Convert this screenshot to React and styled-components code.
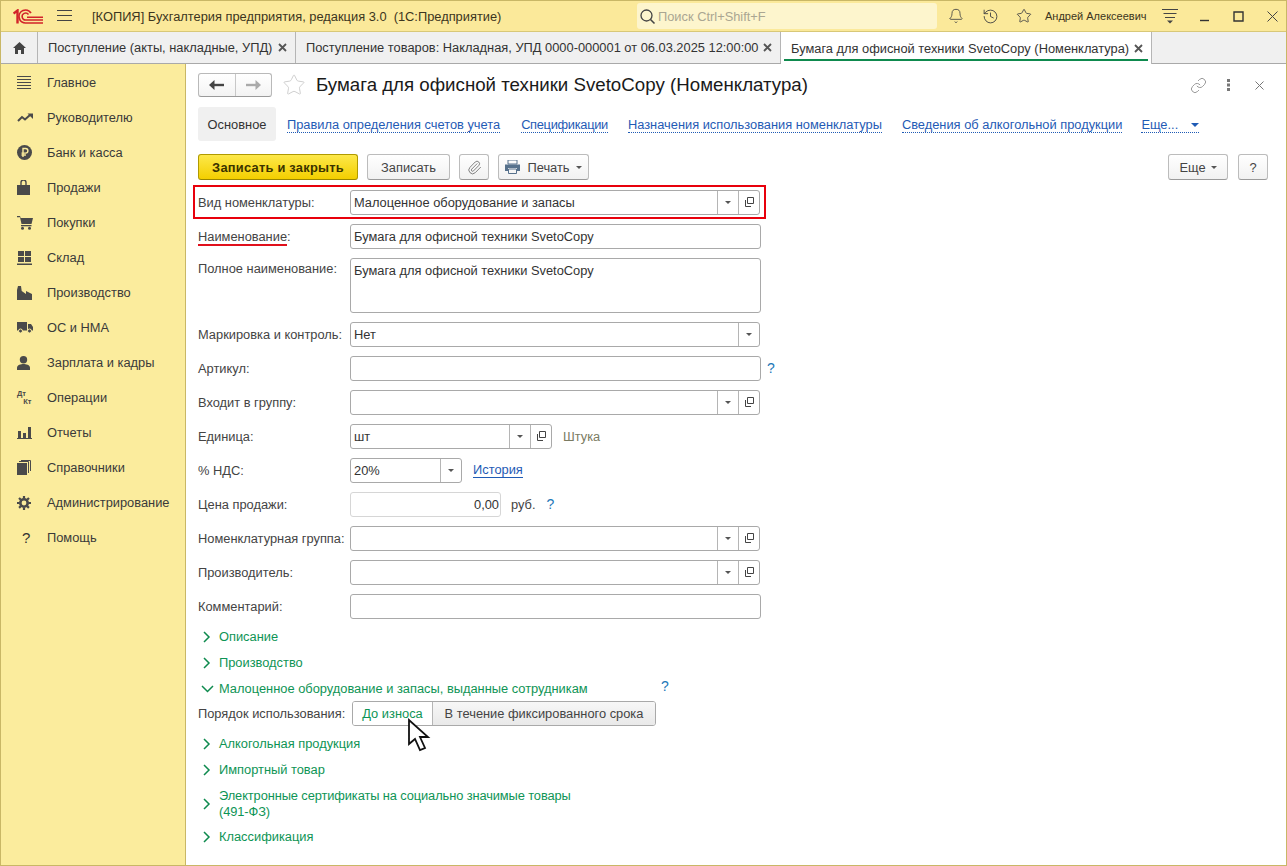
import React from 'react';
import styled, { createGlobalStyle } from 'styled-components';
import { Bell, History, Star, Link, Paperclip } from 'lucide-react';

const GlobalStyle = createGlobalStyle`
  html, body { margin: 0; padding: 0; background: #fff; }
  * { box-sizing: border-box; }
  body { font-family: "Liberation Sans", Arial, sans-serif; font-size: 12.85px; color: #333; }
`;

const Window = styled.div`
  width: 1287px;
  height: 866px;
  display: flex;
  flex-direction: column;
  border: 1px solid #c9b766;
  overflow: hidden;
  position: relative;
`;
const TitleBar = styled.div`
  height: 30px;
  flex: none;
  background: #fbe99a;
  display: flex;
  align-items: center;
  padding-left: 12px;
`;
const MenuGlyph = styled.svg`
  margin-left: 14px;
  flex: none;
`;
const TitleText = styled.div`
  margin-left: 20px;
  width: 545px;
  flex: none;
  color: #3c3520;
  white-space: pre;
`;
const SearchBox = styled.div`
  width: 300px;
  height: 26px;
  background: #fdf5cd;
  border-radius: 3px;
  display: flex;
  align-items: center;
  padding-left: 2px;
  color: #aaa692;
  gap: 2px;
  flex: none;
`;
const TitleCells = styled.div`
  display: flex;
  align-items: center;
  margin-left: 2px;
  flex: none;
`;
const TitleCell = styled.span`
  width: 34px;
  display: flex;
  justify-content: center;
  color: #444;
  flex: none;
`;
const UserName = styled.span`
  font-size: 11px;
  color: #3c3520;
  margin-left: 4px;
  width: 117px;
  white-space: nowrap;
`;
const WinButtons = styled.div`
  display: flex;
  align-items: center;
  margin-left: 9px;
  flex: none;
`;
const TabBar = styled.div`
  height: 33px;
  flex: none;
  background: #f0f0f0;
  border-bottom: 1px solid #a9a9a9;
  border-top: 1px solid #d8c878;
  display: flex;
`;
const HomeTab = styled.div`
  width: 37px;
  border-right: 1px solid #b5b5b5;
  display: flex;
  align-items: center;
  justify-content: center;
`;
const Tab = styled.div`
  width: ${(p) => p.$w}px;
  position: relative;
  display: flex;
  align-items: center;
  justify-content: space-between;
  padding: 0 8px 0 10px;
  border-right: 1px solid #b5b5b5;
  background: ${(p) => (p.$active ? '#fff' : 'transparent')};
  height: ${(p) => (p.$active ? '32px' : '31px')};
  white-space: nowrap;
  color: #333;
  &::after {
    content: '';
    display: ${(p) => (p.$active ? 'block' : 'none')};
    position: absolute;
    left: 3px;
    right: 3px;
    bottom: 3px;
    height: 2px;
    background: #0e8a4e;
  }
`;
const TabClose = styled.svg`
  flex: none;
`;
const Body = styled.div`
  flex: 1;
  display: flex;
  min-height: 0;
`;
const Sidebar = styled.nav`
  width: 185px;
  flex: none;
  background: #fbec9d;
  border-right: 1px solid #c9b766;
  padding-top: 1px;
`;
const NavItem = styled.div`
  height: 35px;
  display: flex;
  align-items: center;
  color: #3a3a3a;
`;
const NavIcon = styled.span`
  width: 46px;
  padding-left: 16px;
  display: flex;
  align-items: center;
  flex: none;
`;
const Main = styled.main`
  flex: 1;
  padding: 0 12px;
  min-width: 0;
`;
const HeaderRow = styled.div`
  height: 42px;
  display: flex;
  align-items: center;
`;
const NavGroup = styled.div`
  width: 74px;
  height: 24px;
  display: flex;
  border: 1px solid #b9b9b9;
  border-bottom-color: #9a9a9a;
  border-radius: 3px;
  background: linear-gradient(#fff, #f3f3f3);
`;
const NavHalf = styled.div`
  flex: 1;
  display: flex;
  align-items: center;
  justify-content: center;
  & + & { border-left: 1px solid #c8c8c8; }
`;
const FavStar = styled.span`
  display: flex;
  margin-left: 10px;
  color: #c9c9c9;
`;
const FormTitle = styled.h1`
  margin: 0 0 0 10px;
  font-size: 18.7px;
  font-weight: 400;
  color: #1a1a1a;
  white-space: nowrap;
`;
const HeaderTools = styled.div`
  margin-left: auto;
  display: flex;
  align-items: center;
  gap: 20px;
  margin-right: 10px;
  color: #888;
`;
const LinkRow = styled.div`
  display: flex;
  align-items: center;
  height: 34px;
  margin-top: 1px;
`;
const ActiveSection = styled.div`
  width: 78px;
  height: 34px;
  margin-right: -9px;
  background: #f0f0f0;
  border-radius: 3px;
  display: flex;
  align-items: center;
  justify-content: center;
  color: #333;
`;
const SectionLink = styled.a`
  color: #1f5bb5;
  margin: 2px 0 0 ${(p) => p.$ml || 20}px;
  border-bottom: 1px dotted #1f5bb5;
  line-height: 15px;
  letter-spacing: ${(p) => p.$ls || 0}px;
  white-space: nowrap;
  display: flex;
  align-items: center;
`;
const CommandBar = styled.div`
  display: flex;
  align-items: center;
  height: 26px;
  margin-top: 13px;
  padding-right: 6px;
`;
const Button = styled.button`
  height: 26px;
  width: ${(p) => p.$w}px;
  margin-left: ${(p) => p.$ml || 0}px;
  padding: 0;
  border: 1px solid ${(p) => (p.$primary ? '#b09a00' : '#bcbcbc')};
  border-bottom-color: ${(p) => (p.$primary ? '#9a8700' : '#9a9a9a')};
  border-radius: 3px;
  background: ${(p) => (p.$primary ? 'linear-gradient(#fde84a, #f3cf00)' : 'linear-gradient(#fff, #f1f1f1)')};
  font: ${(p) => (p.$primary ? 700 : 400)} 12.85px "Liberation Sans", Arial, sans-serif;
  letter-spacing: ${(p) => (p.$primary ? '0.25px' : '0')};
  color: ${(p) => (p.$primary ? '#3a3300' : '#444')};
  display: flex;
  align-items: center;
  justify-content: center;
  gap: ${(p) => p.$gap || 0}px;
  flex: none;
`;
const Spring = styled.div`
  flex: 1;
`;
const Caret = styled.span`
  width: 0;
  height: 0;
  border-left: ${(p) => p.$size || 3}px solid transparent;
  border-right: ${(p) => p.$size || 3}px solid transparent;
  border-top: ${(p) => p.$size || 3}px solid ${(p) => p.$color || '#555'};
  display: inline-block;
  margin-left: ${(p) => p.$ml || 0}px;
`;
const Row = styled.div`
  display: flex;
  align-items: ${(p) => (p.$top ? 'flex-start' : 'center')};
  height: ${(p) => p.$h || 34}px;
  padding-top: ${(p) => p.$pt || 0}px;
`;
const HighlightRow = styled(Row)`
  margin: 5px 0 0 -5px;
  padding-left: 3px;
  width: 573px;
  border: 2px solid #e8000c;
`;
const ToggleRow = styled(Row)`
  height: 25px;
  margin-bottom: 4px;
`;
const Label = styled.label`
  width: ${(p) => p.$w || 152}px;
  flex: none;
  color: #444;
  white-space: nowrap;
  padding-top: ${(p) => p.$pt || 0}px;
`;
const Underlined = styled.span`
  position: relative;
  &::after {
    content: '';
    position: absolute;
    left: 0;
    right: 0;
    bottom: -2px;
    height: 2px;
    background: #e0101c;
  }
`;
const Field = styled.div`
  width: ${(p) => p.$w || 411}px;
  height: ${(p) => p.$h || 25}px;
  border: 1px solid ${(p) => (p.$light ? '#d6d6d6' : '#a9a9a9')};
  border-radius: 3px;
  background: #fff;
  display: flex;
  align-items: stretch;
  color: #333;
  flex: none;
`;
const FieldText = styled.div`
  flex: 1;
  padding: ${(p) => (p.$top ? '4px' : '0')} ${(p) => (p.$right ? 1 : 2)}px 0 3px;
  display: flex;
  align-items: ${(p) => (p.$top ? 'flex-start' : 'center')};
  justify-content: ${(p) => (p.$right ? 'flex-end' : 'flex-start')};
  white-space: nowrap;
`;
const FieldBtn = styled.div`
  width: ${(p) => p.$w || 21}px;
  border-left: 1px solid #b5b5b5;
  display: flex;
  align-items: center;
  justify-content: center;
  flex: none;
`;
const Hint = styled.span`
  color: #1d78b8;
  font-size: 14px;
  margin-left: ${(p) => p.$ml}px;
`;
const Muted = styled.span`
  color: #7b7b62;
  margin-left: 11px;
`;
const Unit = styled.span`
  color: #444;
  margin-left: 10px;
`;
const PlainLink = styled.a`
  color: #1f5bb5;
  margin-left: 11px;
  border-bottom: 1px solid #1f5bb5;
  line-height: 14px;
`;
const Group = styled.div`
  display: flex;
  align-items: center;
  height: ${(p) => p.$h || 26}px;
  padding-top: 2px;
  color: #0e9455;
  position: relative;
  line-height: 16px;
`;
const GroupIcon = styled.span`
  width: 21px;
  padding-left: ${(p) => (p.$open ? 3 : 5)}px;
  display: flex;
  flex: none;
`;
const GroupTitle = styled.div`
  letter-spacing: ${(p) => p.$ls || 0}px;
`;
const GroupHint = styled(Hint)`
  position: absolute;
  left: 463px;
  top: 3px;
`;
const Toggle = styled.div`
  display: flex;
  height: 25px;
  width: 304px;
  border: 1px solid #a9a9a9;
  border-radius: 3px;
  overflow: hidden;
`;
const ToggleItem = styled.div`
  display: flex;
  align-items: center;
  justify-content: center;
  width: ${(p) => p.$w}px;
  color: ${(p) => (p.$on ? '#0e9455' : '#444')};
  background: ${(p) => (p.$on ? '#fff' : 'linear-gradient(#f7f7f7, #e9e9e9)')};
  border-left: ${(p) => (p.$on ? 'none' : '1px solid #b5b5b5')};
  white-space: nowrap;
`;
const Pointer = styled.svg`
  position: absolute;
  left: 406px;
  top: 717px;
`;

const D = '#4a4a4a';
const icons = {
  menu: <svg width="14" height="13" viewBox="0 0 14 13"><path d="M0 .5h14M0 3.5h14M0 6.5h14M0 9.5h14M0 12.5h14" stroke={D} strokeWidth="1" /></svg>,
  trend: <svg width="16" height="10" viewBox="0 0 16 10"><path d="M1 8l4-4 3 2.500L13 2" fill="none" stroke={D} strokeWidth="2" /><path d="M10.500 .5H16V6z" fill={D} /></svg>,
  ruble: <svg width="15" height="15" viewBox="0 0 15 15"><circle cx="7.500" cy="7.500" r="7.500" fill={D} /><path d="M6 12V3.500h2.600a2.300 2.300 0 010 4.600H4.500M4.500 10h4.400" fill="none" stroke="#fbec9d" strokeWidth="1.400" /></svg>,
  bag: <svg width="13" height="15" viewBox="0 0 13 15"><path d="M0 5h13v10H0z" fill={D} /><path d="M4 7V2.500a2.500 2.500 0 015 0V7" fill="none" stroke={D} strokeWidth="1.400" /></svg>,
  cart: <svg width="16" height="14" viewBox="0 0 16 14"><path d="M0 0h3l.7 2H16l-1.500 6H4.500L3 1.300H0z" fill={D} /><path d="M4 9h10.500v1.300H4z" fill={D} /><circle cx="5.500" cy="12.300" r="1.500" fill={D} /><circle cx="12.500" cy="12.300" r="1.500" fill={D} /></svg>,
  stock: <svg width="15" height="14" viewBox="0 0 15 14"><path d="M1 0h6v5H1zM8 0h6v5H8zM1 6h6v5H1zM8 6h6v5H8zM0 12.500h15V14H0z" fill={D} /></svg>,
  factory: <svg width="15" height="14" viewBox="0 0 15 14"><path d="M0 14V4l1-4h3l.7 5L9 8V5l6 3v6z" fill={D} /></svg>,
  truck: <svg width="16" height="11" viewBox="0 0 16 11"><path d="M0 0h10v8.500H0zM11 2h3l2 3v3.500h-5z" fill={D} /><circle cx="3.500" cy="9" r="2" fill={D} stroke="#fbec9d" /><circle cx="12.500" cy="9" r="2" fill={D} stroke="#fbec9d" /></svg>,
  person: <svg width="13" height="14" viewBox="0 0 13 14"><circle cx="6.500" cy="3.700" r="3.700" fill={D} /><path d="M0 14v-2.500C0 9 4 8 6.500 8s6.500 1 6.500 3.500V14z" fill={D} /></svg>,
  report: <svg width="15" height="12" viewBox="0 0 15 12"><path d="M1 4h3v7H1zM6 6h3v5H6zM11 0h3v11h-3zM0 11h15v1H0z" fill={D} /></svg>,
  books: <svg width="14" height="15" viewBox="0 0 14 15"><path d="M0 3h10v12H0z" fill={D} /><path d="M2 1.500h9.500V13M4 .5h9.500V11" fill="none" stroke={D} /></svg>,
  gear: <svg width="14" height="14" viewBox="0 0 14 14"><circle cx="7" cy="7" r="3.700" fill="none" stroke={D} strokeWidth="2.600" /><path d="M7 0v14M0 7h14M2 2l10 10M12 2L2 12" stroke={D} strokeWidth="2.200" strokeDasharray="2.600 8.800 2.600" /></svg>,
};
const DtKt = styled.span`
  font: 700 7.5px/8px "Liberation Sans", Arial, sans-serif;
  color: #4a4a4a;
  display: block;
  white-space: pre;
`;
const QuestionGlyph = styled.span`
  font-size: 15px;
  color: #333;
  padding-left: 5px;
`;

const navItems = [
  ['Главное', icons.menu],
  ['Руководителю', icons.trend],
  ['Банк и касса', icons.ruble],
  ['Продажи', icons.bag],
  ['Покупки', icons.cart],
  ['Склад', icons.stock],
  ['Производство', icons.factory],
  ['ОС и НМА', icons.truck],
  ['Зарплата и кадры', icons.person],
  ['Операции', <DtKt>{'Дт\n   Кт'}</DtKt>],
  ['Отчеты', icons.report],
  ['Справочники', icons.books],
  ['Администрирование', icons.gear],
  ['Помощь', <QuestionGlyph>?</QuestionGlyph>],
];

const OpenIcon = () => (
  <svg width="10" height="10" viewBox="0 0 10 10">
    <path d="M3.500 .5h6v6h-6zM1.500 3v6.500H7" fill="none" stroke="#444" />
  </svg>
);

const CloseX = () => (
  <TabClose width="9" height="9" viewBox="0 0 9 9">
    <path d="M1 1l7 7M8 1L1 8" stroke="#555" strokeWidth="1.800" />
  </TabClose>
);

const LookupField = ({ w = 410, value, open = true }) => (
  <Field $w={w}>
    <FieldText>{value}</FieldText>
    <FieldBtn><Caret /></FieldBtn>
    {open && <FieldBtn><OpenIcon /></FieldBtn>}
  </Field>
);

const Closed = ({ children, h, ls }) => (
  <Group $h={h}>
    <GroupIcon>
      <svg width="8" height="12" viewBox="0 0 8 12"><path d="M1 1l5 5-5 5" fill="none" stroke="#0e8a4e" strokeWidth="1.500" /></svg>
    </GroupIcon>
    <GroupTitle $ls={ls}>{children}</GroupTitle>
  </Group>
);

const App = () => (
  <>
    <GlobalStyle />
    <Window>
      <TitleBar>
        <svg width="30" height="15" viewBox="0 0 30 15" style={{ flex: 'none' }}>
          <path d="M.5 4.500L4.500 1.500V14.500" fill="none" stroke="#d2232a" strokeWidth="2.400" />
          <path d="M18 4A6.500 6.500 0 1013 14h17" fill="none" stroke="#d2232a" strokeWidth="1.700" />
          <path d="M15.500 5.500A3.500 3.500 0 1013 11h17M14 8.200h16" fill="none" stroke="#d2232a" strokeWidth="1.500" />
        </svg>
        <MenuGlyph width="15" height="12" viewBox="0 0 15 12">
          <path d="M0 .5h15M0 5.500h15M0 10.500h15" stroke="#444" />
        </MenuGlyph>
        <TitleText>[КОПИЯ] Бухгалтерия предприятия, редакция 3.0  (1С:Предприятие)</TitleText>
        <SearchBox>
          <svg width="17" height="17" viewBox="0 0 17 17">
            <circle cx="7.500" cy="7.500" r="5.500" fill="none" stroke="#444" strokeWidth="1.300" />
            <path d="M11.500 11.500l4 4" stroke="#444" strokeWidth="1.600" />
          </svg>
          Поиск Ctrl+Shift+F
        </SearchBox>
        <TitleCells>
          <TitleCell><Bell size={16} strokeWidth={1.3} /></TitleCell>
          <TitleCell><History size={17} strokeWidth={1.3} /></TitleCell>
          <TitleCell><Star size={16} strokeWidth={1.3} /></TitleCell>
          <UserName>Андрей Алексеевич</UserName>
        </TitleCells>
        <svg width="16" height="15" viewBox="0 0 16 15" style={{ flex: 'none' }}>
          <path d="M0 .5h16M1.500 4.500h13M3 8.500h10" stroke="#444" />
          <path d="M5 11.500h6l-3 3z" fill="#444" />
        </svg>
        <WinButtons>
          <TitleCell><svg width="11" height="11" viewBox="0 0 11 11"><path d="M1 9.500h9" stroke="#333" strokeWidth="1.400" /></svg></TitleCell>
          <TitleCell><svg width="11" height="11" viewBox="0 0 11 11"><path d="M1 1h9v9H1z" fill="none" stroke="#333" strokeWidth="1.400" /></svg></TitleCell>
          <TitleCell><svg width="11" height="11" viewBox="0 0 11 11"><path d="M.5 .5l10 10M10.500 .5l-10 10" stroke="#444" /></svg></TitleCell>
        </WinButtons>
      </TitleBar>
      <TabBar>
        <HomeTab>
          <svg width="13" height="12" viewBox="0 0 13 12"><path d="M6.500 0L13 6h-2v6H8V8H5v4H2V6H0z" fill="#444" /></svg>
        </HomeTab>
        <Tab $w={258}>Поступление (акты, накладные, УПД)<CloseX /></Tab>
        <Tab $w={485}>Поступление товаров: Накладная, УПД 0000-000001 от 06.03.2025 12:00:00<CloseX /></Tab>
        <Tab $w={371} $active>Бумага для офисной техники SvetoCopy (Номенклатура)<CloseX /></Tab>
      </TabBar>
      <Body>
        <Sidebar>
          {navItems.map(([name, icon]) => (
            <NavItem key={name}><NavIcon>{icon}</NavIcon>{name}</NavItem>
          ))}
        </Sidebar>
        <Main>
          <HeaderRow>
            <NavGroup>
              <NavHalf>
                <svg width="15" height="10" viewBox="0 0 15 10"><path d="M15 5H4" stroke="#444" strokeWidth="2.400" /><path d="M5.500 0v10L0 5z" fill="#444" /></svg>
              </NavHalf>
              <NavHalf>
                <svg width="15" height="10" viewBox="0 0 15 10"><path d="M0 5h11" stroke="#aaa" strokeWidth="2.400" /><path d="M9.500 0v10L15 5z" fill="#aaa" /></svg>
              </NavHalf>
            </NavGroup>
            <FavStar><Star size={24} strokeWidth={0.9} /></FavStar>
            <FormTitle>Бумага для офисной техники SvetoCopy (Номенклатура)</FormTitle>
            <HeaderTools>
              <Link size={17} strokeWidth={1.2} />
              <svg width="4" height="12" viewBox="0 0 4 12"><path d="M0 0h3v3H0zM0 4.500h3v3H0zM0 9h3v3H0z" fill="#777" /></svg>
              <svg width="9" height="9" viewBox="0 0 9 9" style={{ marginLeft: 4 }}><path d="M.5 .5l8 8M8.500 .5l-8 8" stroke="#777" /></svg>
            </HeaderTools>
          </HeaderRow>
          <LinkRow>
            <ActiveSection>Основное</ActiveSection>
            <SectionLink>Правила определения счетов учета</SectionLink>
            <SectionLink $ml={21} $ls={-0.3}>Спецификации</SectionLink>
            <SectionLink>Назначения использования номенклатуры</SectionLink>
            <SectionLink>Сведения об алкогольной продукции</SectionLink>
            <SectionLink $ml={19}>Еще...<Caret $color="#1f5bb5" $size={4} $ml={13} /></SectionLink>
          </LinkRow>
          <CommandBar>
            <Button $primary $w={160}>Записать и закрыть</Button>
            <Button $w={83} $ml={9}>Записать</Button>
            <Button $w={30} $ml={9}><Paperclip size={15} strokeWidth={1.3} color="#666" /></Button>
            <Button $w={91} $ml={9} $gap={7}>
              <svg width="15" height="14" viewBox="0 0 15 14"><path d="M3 0h9v4H3z" fill="none" stroke="#56718c" /><path d="M0 4.500h15V11h-3V8H3v3H0z" fill="#56718c" /><path d="M3.500 9h8v4.500h-8z" fill="none" stroke="#56718c" /></svg>
              Печать<Caret $ml={-1} />
            </Button>
            <Spring />
            <Button $w={60} $gap={5}>Еще<Caret /></Button>
            <Button $w={30} $ml={10}>?</Button>
          </CommandBar>
          <HighlightRow>
            <Label>Вид номенклатуры:</Label>
            <LookupField value="Малоценное оборудование и запасы" />
          </HighlightRow>
          <Row>
            <Label><Underlined>Наименование</Underlined>:</Label>
            <Field><FieldText>Бумага для офисной техники SvetoCopy</FieldText></Field>
          </Row>
          <Row $top $h={64} $pt={5}>
            <Label $pt={3}>Полное наименование:</Label>
            <Field $h={55}><FieldText $top>Бумага для офисной техники SvetoCopy</FieldText></Field>
          </Row>
          <Row>
            <Label>Маркировка и контроль:</Label>
            <LookupField value="Нет" open={false} />
          </Row>
          <Row>
            <Label>Артикул:</Label>
            <Field><FieldText /></Field>
            <Hint $ml={6}>?</Hint>
          </Row>
          <Row>
            <Label>Входит в группу:</Label>
            <LookupField />
          </Row>
          <Row>
            <Label>Единица:</Label>
            <LookupField w={202} value="шт" />
            <Muted>Штука</Muted>
          </Row>
          <Row>
            <Label>% НДС:</Label>
            <LookupField w={112} value="20%" open={false} />
            <PlainLink>История</PlainLink>
          </Row>
          <Row>
            <Label>Цена продажи:</Label>
            <Field $w={151} $light><FieldText $right>0,00</FieldText></Field>
            <Unit>руб.</Unit>
            <Hint $ml={11}>?</Hint>
          </Row>
          <Row>
            <Label>Номенклатурная группа:</Label>
            <LookupField />
          </Row>
          <Row>
            <Label>Производитель:</Label>
            <LookupField />
          </Row>
          <Row>
            <Label>Комментарий:</Label>
            <Field><FieldText /></Field>
          </Row>
          <Closed>Описание</Closed>
          <Closed>Производство</Closed>
          <Group>
            <GroupIcon $open>
              <svg width="13" height="8" viewBox="0 0 13 8"><path d="M1 1l5.500 5.500L12 1" fill="none" stroke="#0e8a4e" strokeWidth="1.500" /></svg>
            </GroupIcon>
            <GroupTitle>Малоценное оборудование и запасы, выданные сотрудникам</GroupTitle>
            <GroupHint>?</GroupHint>
          </Group>
          <ToggleRow>
            <Label $w={154}>Порядок использования:</Label>
            <Toggle>
              <ToggleItem $on $w={79}>До износа</ToggleItem>
              <ToggleItem $w={223}>В течение фиксированного срока</ToggleItem>
            </Toggle>
          </ToggleRow>
          <Closed>Алкогольная продукция</Closed>
          <Closed>Импортный товар</Closed>
          <Closed h={41} ls={-0.1}>Электронные сертификаты на социально значимые товары<br />(491-ФЗ)</Closed>
          <Closed>Классификация</Closed>
        </Main>
      </Body>
      <Pointer width="24" height="34" viewBox="0 0 24 34">
        <path d="M2 2v24l6-5 5 11 5-2-5-11h8z" fill="#fff" stroke="#111" strokeWidth="1.800" />
      </Pointer>
    </Window>
  </>
);

export default App;
